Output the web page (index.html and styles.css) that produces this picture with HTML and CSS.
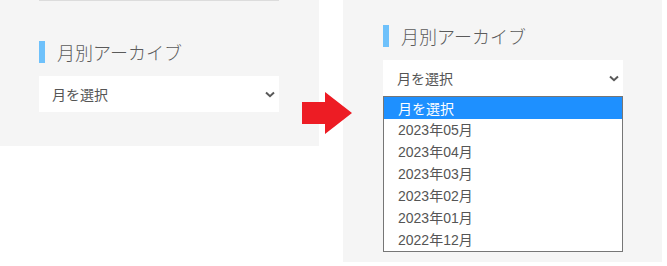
FILE: index.html
```html
<!DOCTYPE html>
<html lang="ja">
<head>
<meta charset="utf-8">
<title>月別アーカイブ</title>
<link rel="stylesheet" href="styles.css">
</head>
<body>
<div class="stage">
  <div class="panel panel-left">
    <div class="rule"></div>
    <h3 class="widget-title">月別アーカイブ</h3>
    <div class="select">
      <span>月を選択</span>
      <svg class="chev" width="10" height="7" viewBox="0 0 10 7"><path d="M1 1.5 L5 5.2 L9 1.5" fill="none" stroke="#595959" stroke-width="2"/></svg>
    </div>
  </div>
  <div class="panel panel-right">
    <h3 class="widget-title">月別アーカイブ</h3>
    <div class="select">
      <span>月を選択</span>
      <svg class="chev" width="10" height="7" viewBox="0 0 10 7"><path d="M1 1.5 L5 5.2 L9 1.5" fill="none" stroke="#595959" stroke-width="2"/></svg>
    </div>
    <ul class="options">
      <li class="opt active">月を選択</li>
      <li class="opt">2023年05月</li>
      <li class="opt">2023年04月</li>
      <li class="opt">2023年03月</li>
      <li class="opt">2023年02月</li>
      <li class="opt">2023年01月</li>
      <li class="opt">2022年12月</li>
    </ul>
  </div>
  <svg class="arrow" width="54" height="46" viewBox="0 0 54 46"><polygon points="2,12 25,12 25,2 52,23 25,44 25,34 2,34" fill="#ed1c24"/></svg>
</div>
</body>
</html>
```

FILE: styles.css
```css
* { box-sizing: border-box; }
html, body { margin: 0; padding: 0; background: #fff; }
body {
  font-family: "Liberation Sans", "Noto Sans CJK JP", sans-serif;
  color: #555;
}
.stage {
  position: relative;
  display: flex;
  align-items: flex-start;
  gap: 24px;
}
.panel {
  background: #f5f5f5;
  width: 319px;
  padding-left: 39px;
}
.panel-left { height: 146px; }
.panel-right { height: 262px; padding-left: 40px; padding-top: 25px; }
.rule {
  width: 240px;
  height: 1px;
  background: #dcdcdc;
}
.widget-title {
  margin: 0;
  height: 22px;
  line-height: 22px;
  font-size: 18px;
  font-weight: 300;
  color: #5a5a5a;
  border-left: 6px solid #6ec1fb;
  padding-left: 12px;
  font-family: "Noto Sans CJK JP", sans-serif;
}
.panel-left .widget-title { margin-top: 40px; }
.select {
  margin-top: 13px;
  width: 240px;
  height: 36px;
  background: #fff;
  display: flex;
  align-items: center;
  justify-content: space-between;
  padding: 0 4px 0 13px;
  font-size: 14px;
  color: #555;
  font-family: "Noto Sans CJK JP", sans-serif;
}
.panel-right .select { padding-left: 14px; }
.chev { display: block; }
.options {
  list-style: none;
  margin: 0;
  padding: 0;
  width: 240px;
  background: #fff;
  border: 1px solid #767676;
}
.opt {
  height: 22px;
  line-height: 22px;
  padding-left: 14px;
  font-size: 14px;
  color: #555;
}
.opt.active {
  background: #1e90ff;
  color: #fff;
  font-family: "Noto Sans CJK JP", sans-serif;
}
.arrow {
  position: absolute;
  left: 300px;
  top: 90px;
}
```
